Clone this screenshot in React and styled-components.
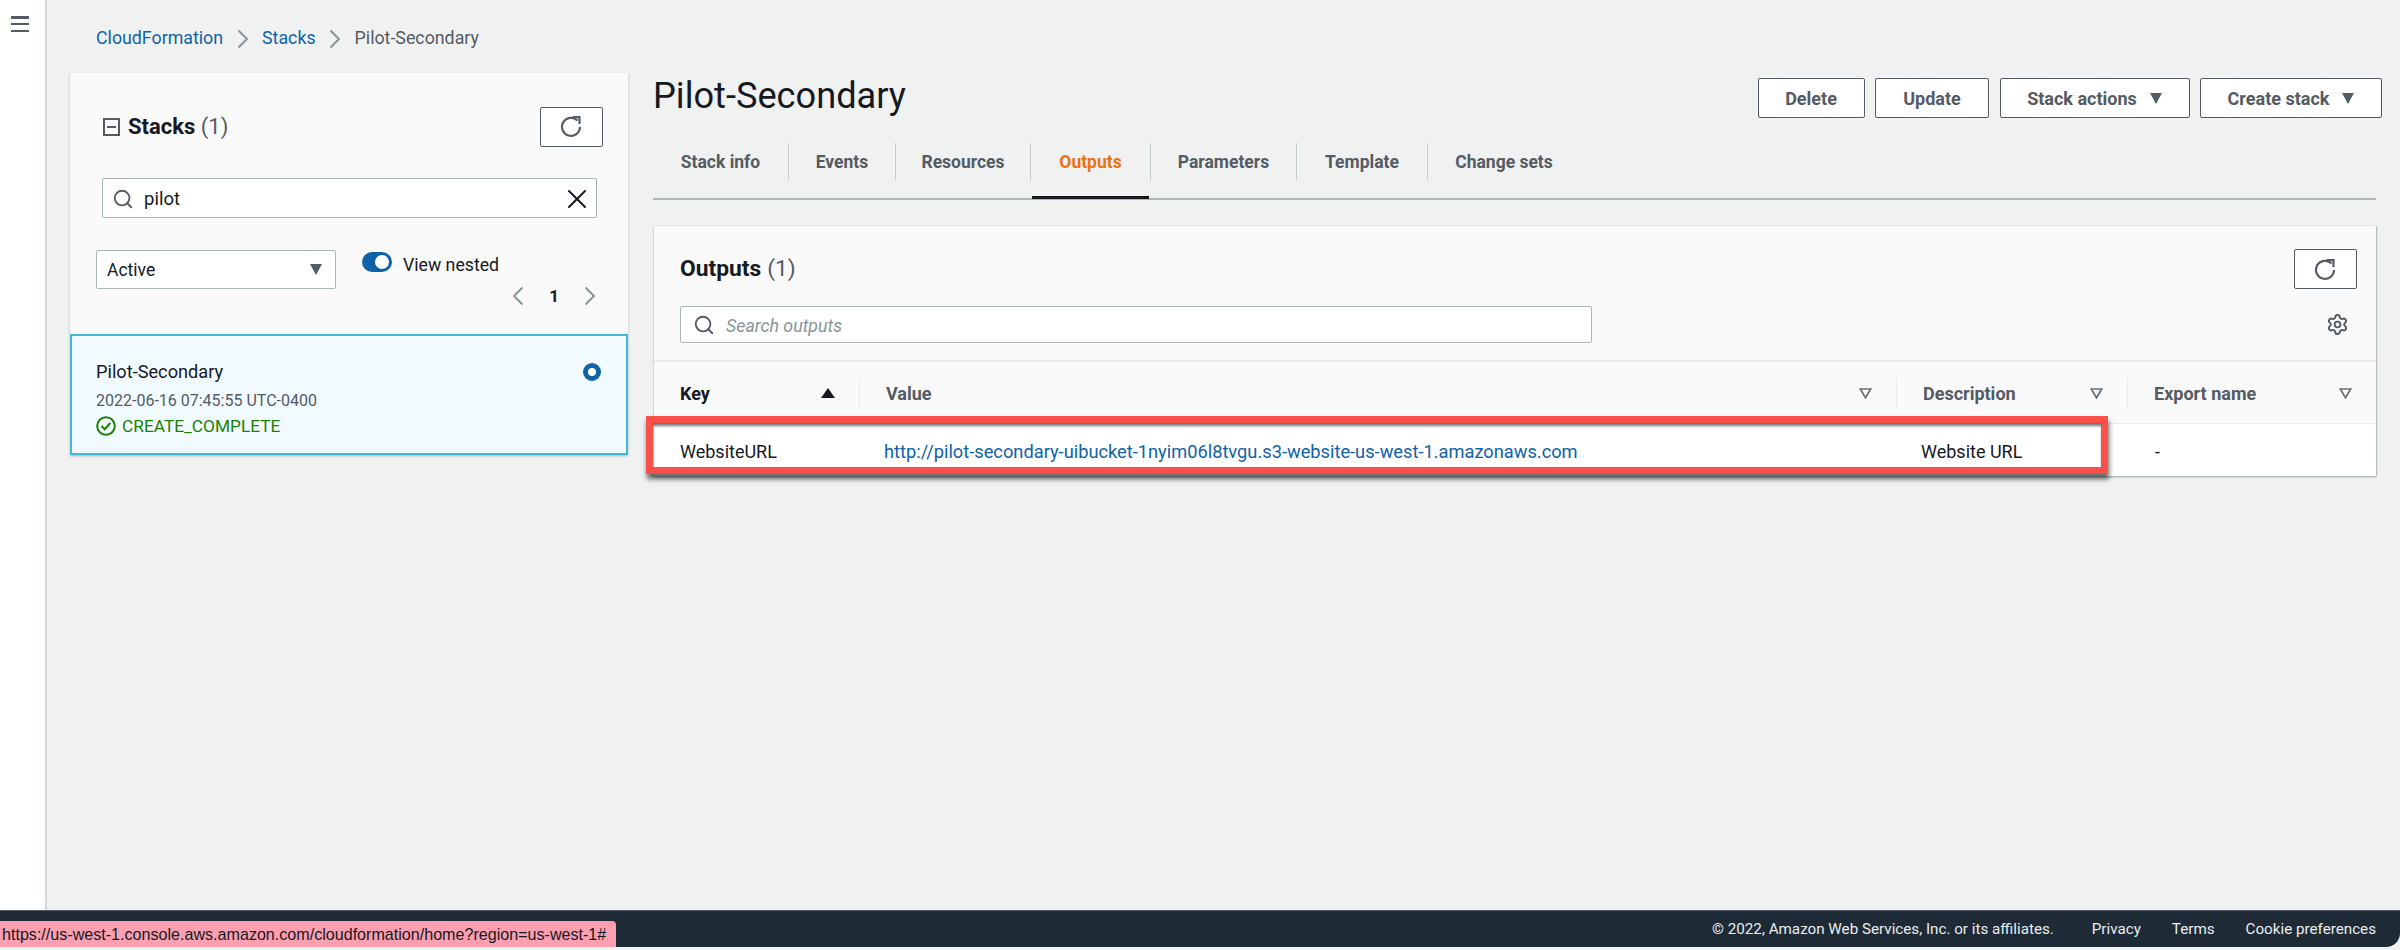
import styled, { createGlobalStyle } from "styled-components";
import { Search, X, Settings } from "lucide-react";

const GlobalStyle = createGlobalStyle`
    html, body {
        margin: 0;
        padding: 0;
        background: #f2f3f3;
    }
    * {
        box-sizing: border-box;
    }
    body {
        font-family: Roboto, "Liberation Sans", sans-serif;
        color: #16191f;
    }
`;

const Page = styled.div`
    width: 2400px;
    height: 950px;
    display: flex;
    flex-direction: column;
    overflow: hidden;
    background: #f0f2f2;
`;
const Shell = styled.div`
    flex: 0 0 910px;
    display: flex;
`;
const Rail = styled.div`
    flex: 0 0 47px;
    background: #fff;
    border-right: 2px solid #d5dbdb;
    padding: 16px 0 0 11px;
`;
const Hamburger = styled.div`
    width: 18px;
    height: 16px;
    display: flex;
    flex-direction: column;
    justify-content: space-between;
    span {
        display: block;
        height: 2.5px;
        background: #545b64;
    }
`;
const Content = styled.div`
    flex: 1;
    padding: 0 18px 0 23px;
`;
const Breadcrumbs = styled.nav`
    height: 73px;
    padding: 27px 0 0 26px;
    display: flex;
    align-items: flex-start;
    gap: 13.5px;
    font-size: 17.8px;
    line-height: 22px;
    color: #545b64;
    svg {
        margin-top: 2px;
    }
`;
const CrumbLink = styled.a`
    color: #0f62a8;
`;
const Columns = styled.div`
    display: flex;
    gap: 25px;
    align-items: flex-start;
`;

/* left stack list */
const StackPanel = styled.aside`
    flex: 0 0 558px;
    height: 382px;
    background: #fafafa;
    box-shadow: 0 1px 2px rgba(0, 28, 36, 0.3);
    display: flex;
    flex-direction: column;
`;
const PanelBody = styled.div`
    flex: 0 0 261px;
    padding: 34px 25px 0 26px;
`;
const StackHead = styled.div`
    display: flex;
    align-items: center;
    justify-content: space-between;
    padding-left: 7px;
    height: 39px;
`;
const PanelTitle = styled.h2`
    margin: 0;
    display: flex;
    align-items: center;
    gap: 8px;
    font-size: 22px;
    font-weight: 700;
    line-height: 36px;
    color: #16191f;
    span {
        color: #545b64;
        font-weight: 400;
    }
`;
const CollapseBox = styled.span`
    width: 17px;
    height: 18px;
    border: 2px solid #545b64;
    display: flex;
    align-items: center;
    justify-content: center;
    &::after {
        content: "";
        width: 9px;
        height: 2px;
        background: #545b64;
    }
`;
const IconButton = styled.button`
    width: 63px;
    height: 40px;
    padding: 0;
    border: 1.5px solid #545b64;
    border-radius: 2px;
    background: #fff;
    display: flex;
    align-items: center;
    justify-content: center;
    flex: none;
`;
const InputBox = styled.div`
    display: flex;
    align-items: center;
    background: #fff;
    border: 1.5px solid #aab7b8;
    border-radius: 2px;
    color: #545b64;
`;
const StackSearch = styled(InputBox)`
    width: 495px;
    height: 40px;
    margin: 32px 0 0 6px;
    padding: 1px 3px 0 9px;
    gap: 10px;
    font-size: 18.5px;
    color: #16191f;
    svg:first-child {
        color: #545b64;
    }
    svg:last-child {
        margin-left: auto;
        color: #16191f;
    }
`;
const FilterRow = styled.div`
    display: flex;
    margin-top: 32px;
    height: 59px;
`;
const Select = styled(InputBox)`
    flex: 0 0 240px;
    height: 39px;
    padding: 0 13px 0 10px;
    justify-content: space-between;
    font-size: 17.5px;
    color: #16191f;
`;
const Caret = styled.span`
    width: 0;
    height: 0;
    border-left: 6.5px solid transparent;
    border-right: 6.5px solid transparent;
    border-top: 11px solid #545b64;
    flex: none;
`;
const NestedCol = styled.div`
    flex: 1;
    padding-left: 26px;
`;
const ToggleLine = styled.div`
    display: flex;
    align-items: center;
    gap: 11px;
    height: 29px;
    font-size: 17.7px;
    color: #16191f;
`;
const Toggle = styled.span`
    width: 30px;
    height: 20px;
    border-radius: 10px;
    background: #0f62a8;
    position: relative;
    margin-top: -6px;
    &::after {
        content: "";
        position: absolute;
        right: 3px;
        top: 3px;
        width: 14px;
        height: 14px;
        border-radius: 50%;
        background: #fff;
    }
`;
const Pager = styled.div`
    display: flex;
    justify-content: flex-end;
    align-items: center;
    gap: 25px;
    margin: 6px 7px 0 0;
    height: 22px;
    font-size: 17px;
    font-weight: 700;
`;
const StackCard = styled.div`
    flex: 1;
    position: relative;
    padding: 24px 24px 0;
    background: #f1faff;
    border: 2px solid #44b9d6;
`;
const StackName = styled.div`
    font-size: 18.2px;
    line-height: 24px;
`;
const StackDate = styled.div`
    margin-top: 7px;
    font-size: 16px;
    line-height: 20px;
    color: #545b64;
`;
const StackStatus = styled.div`
    margin-top: 2px;
    display: flex;
    align-items: center;
    gap: 6px;
    font-size: 17.3px;
    line-height: 26px;
    color: #1d8102;
`;
const Radio = styled.span`
    position: absolute;
    top: 27px;
    right: 25px;
    width: 18px;
    height: 18px;
    border-radius: 50%;
    border: 5px solid #0f62a8;
    background: #fff;
`;

/* right detail area */
const Detail = styled.main`
    flex: 1;
    min-width: 0;
`;
const TitleRow = styled.div`
    display: flex;
    justify-content: space-between;
    align-items: flex-start;
    height: 70px;
`;
const PageTitle = styled.h1`
    margin: 1px 0 0;
    font-size: 36.2px;
    font-weight: 400;
    line-height: 44px;
    color: #16191f;
`;
const Actions = styled.div`
    display: flex;
    gap: 10.5px;
    padding-top: 5px;
`;
const ActionButton = styled.button`
    width: ${({ $w }) => $w}px;
    height: 40px;
    padding: 0;
    border: 1.5px solid #545b64;
    border-radius: 2px;
    background: #fff;
    color: #545b64;
    font-family: inherit;
    font-size: 18px;
    font-weight: 700;
    display: flex;
    align-items: center;
    justify-content: center;
    gap: 13px;
`;
const Tabs = styled.div`
    display: flex;
    margin-right: 6px;
    height: 57px;
    border-bottom: 2px solid #aab7b8;
`;
const Tab = styled.div`
    position: relative;
    width: ${({ $w }) => $w}px;
    height: 37px;
    display: flex;
    align-items: center;
    justify-content: center;
    font-size: 17.5px;
    font-weight: 700;
    color: ${({ $active }) => ($active ? "#ec7211" : "#545b64")};
    border-right: ${({ $last }) => ($last ? "none" : "1.5px solid #c4cccc")};
    &::after {
        content: "";
        display: ${({ $active }) => ($active ? "block" : "none")};
        position: absolute;
        left: 1px;
        right: 1px;
        top: 53px;
        height: 3px;
        background: #16191f;
    }
`;
const OutputCard = styled.section`
    position: relative;
    margin: 26px 6px 0 1px;
    background: #fff;
    box-shadow: 0 1px 2px rgba(0, 28, 36, 0.35), 1px 0 1px rgba(0, 28, 36, 0.15);
`;
const CardHead = styled.div`
    height: 136px;
    padding: 23px 19px 0 26px;
    background: #fafafa;
    border-bottom: 2px solid #eaeded;
`;
const CardTop = styled.div`
    display: flex;
    justify-content: space-between;
    align-items: center;
`;
const CardTitle = styled(PanelTitle)`
    font-size: 22.8px;
    gap: 6px;
`;
const CardTools = styled.div`
    display: flex;
    justify-content: space-between;
    align-items: center;
    margin-top: 17px;
    padding-right: 8px;
    svg {
        color: #545b64;
    }
`;
const OutputSearch = styled(InputBox)`
    width: 912px;
    height: 37px;
    padding: 0 12px;
    gap: 11px;
`;
const Placeholder = styled.span`
    padding-top: 1px;
    font-size: 17.8px;
    font-style: italic;
    color: #879596;
`;
const TableHead = styled.div`
    display: grid;
    grid-template-columns: 206px 1037px 231px 1fr;
    height: 62px;
    align-items: center;
    background: #fafafa;
    border-bottom: 1.5px solid #eaeded;
`;
const HeadCell = styled.div`
    height: 30px;
    padding: 1px 24px 0 26px;
    display: flex;
    align-items: center;
    justify-content: space-between;
    font-size: 18px;
    font-weight: 700;
    color: ${({ $sorted }) => ($sorted ? "#16191f" : "#545b64")};
    border-right: ${({ $last }) => ($last ? "none" : "1.5px solid #eaeded")};
`;
const SortUp = styled.span`
    width: 0;
    height: 0;
    border-left: 7px solid transparent;
    border-right: 7px solid transparent;
    border-bottom: 10px solid #16191f;
`;
const TableRow = styled.div`
    display: grid;
    grid-template-columns: 206px 1037px 231px 1fr;
    height: 52px;
    padding-top: 2px;
    align-items: center;
    font-size: 18px;
`;
const Cell = styled.div`
    padding-left: ${({ $pad }) => $pad || 26}px;
    white-space: nowrap;
`;
const ValueLink = styled.a`
    font-size: 18.25px;
    color: #0f62a8;
`;
const Highlight = styled.div`
    position: absolute;
    left: -8px;
    top: 190px;
    width: 1462px;
    height: 58px;
    border: 7px solid #f9504a;
    box-shadow: 1px 5px 5px rgba(0, 0, 0, 0.6), inset 0 4px 3px -1px rgba(0, 0, 0, 0.55);
    pointer-events: none;
`;

/* footer */
const Footer = styled.footer`
    position: relative;
    flex: 0 0 37px;
    background: #1f2a37;
    border-top: 1px solid #545b64;
    border-radius: 0 0 14px 0;
    display: flex;
    justify-content: flex-end;
    align-items: center;
    padding: 0 24px 0 0;
    gap: 31px;
    font-size: 15.2px;
    color: #eaeded;
`;
const Copyright = styled.span`
    margin-right: 7px;
`;
const StatusTip = styled.div`
    position: absolute;
    left: 0;
    bottom: 0;
    width: 616px;
    height: 26px;
    padding-left: 2px;
    background: #fb9fb1;
    border-radius: 0 4px 0 0;
    font-family: "Liberation Sans", Arial, sans-serif;
    font-size: 16.1px;
    line-height: 26px;
    color: #16191f;
    white-space: nowrap;
`;

function RefreshIcon() {
    return (
        <svg width="23" height="23" viewBox="0 0 23 23" fill="none" stroke="#545b64" strokeWidth="2.2">
            <path d="M20 12 A9 9 0 1 1 17.5 5.6" />
            <path d="M12.5 2.2 H19.5 V9" />
        </svg>
    );
}

function FilterIcon() {
    return (
        <svg width="13" height="11" viewBox="0 0 13 11" fill="none" stroke="#687078" strokeWidth="1.7">
            <path d="M1.3 1h10.4L6.5 9.8z" />
        </svg>
    );
}

function CheckIcon() {
    return (
        <svg width="20" height="20" viewBox="0 0 20 20" fill="none" stroke="#1d8102" strokeWidth="2">
            <circle cx="10" cy="10" r="8.8" />
            <path d="M5.5 10l3.2 3.2 5.6-6.2" />
        </svg>
    );
}

function Chevron({ left }) {
    return (
        <svg width="12" height="20" viewBox="0 0 12 20" fill="none" stroke="#879596" strokeWidth="2">
            <path d={left ? "M10.5 1.5 L2 10 L10.5 18.5" : "M1.5 1.5 L10 10 L1.5 18.5"} />
        </svg>
    );
}

const headers = [
    { label: "Key", sorted: true },
    { label: "Value" },
    { label: "Description" },
    { label: "Export name", last: true },
];

const tabs = [
    { label: "Stack info", width: 136 },
    { label: "Events", width: 107 },
    { label: "Resources", width: 135 },
    { label: "Outputs", width: 120 },
    { label: "Parameters", width: 146 },
    { label: "Template", width: 131 },
    { label: "Change sets", width: 152 },
];

export default function App() {
    return (
        <>
            <GlobalStyle />
            <Page>
                <Shell>
                    <Rail>
                        <Hamburger>
                            <span />
                            <span />
                            <span />
                        </Hamburger>
                    </Rail>
                    <Content>
                        <Breadcrumbs>
                            <CrumbLink>CloudFormation</CrumbLink>
                            <Chevron />
                            <CrumbLink>Stacks</CrumbLink>
                            <Chevron />
                            <span>Pilot-Secondary</span>
                        </Breadcrumbs>
                        <Columns>
                            <StackPanel>
                                <PanelBody>
                                    <StackHead>
                                        <PanelTitle>
                                            <CollapseBox />
                                            <div>
                                                Stacks <span>(1)</span>
                                            </div>
                                        </PanelTitle>
                                        <IconButton>
                                            <RefreshIcon />
                                        </IconButton>
                                    </StackHead>
                                    <StackSearch>
                                        <Search size={22} />
                                        pilot
                                        <X size={32} strokeWidth={1.5} />
                                    </StackSearch>
                                    <FilterRow>
                                        <Select>
                                            Active
                                            <Caret />
                                        </Select>
                                        <NestedCol>
                                            <ToggleLine>
                                                <Toggle />
                                                View nested
                                            </ToggleLine>
                                            <Pager>
                                                <Chevron left />
                                                1
                                                <Chevron />
                                            </Pager>
                                        </NestedCol>
                                    </FilterRow>
                                </PanelBody>
                                <StackCard>
                                    <StackName>Pilot-Secondary</StackName>
                                    <StackDate>2022-06-16 07:45:55 UTC-0400</StackDate>
                                    <StackStatus>
                                        <CheckIcon />
                                        CREATE_COMPLETE
                                    </StackStatus>
                                    <Radio />
                                </StackCard>
                            </StackPanel>
                            <Detail>
                                <TitleRow>
                                    <PageTitle>Pilot-Secondary</PageTitle>
                                    <Actions>
                                        <ActionButton $w={107}>Delete</ActionButton>
                                        <ActionButton $w={114}>Update</ActionButton>
                                        <ActionButton $w={190}>
                                            Stack actions
                                            <Caret />
                                        </ActionButton>
                                        <ActionButton $w={182}>
                                            Create stack
                                            <Caret />
                                        </ActionButton>
                                    </Actions>
                                </TitleRow>
                                <Tabs>
                                    {tabs.map((tab, i) => (
                                        <Tab
                                            key={tab.label}
                                            $w={tab.width}
                                            $last={i === tabs.length - 1}
                                            $active={tab.label === "Outputs"}
                                        >
                                            {tab.label}
                                        </Tab>
                                    ))}
                                </Tabs>
                                <OutputCard>
                                    <CardHead>
                                        <CardTop>
                                            <CardTitle>
                                                Outputs <span>(1)</span>
                                            </CardTitle>
                                            <IconButton>
                                                <RefreshIcon />
                                            </IconButton>
                                        </CardTop>
                                        <CardTools>
                                            <OutputSearch>
                                                <Search size={22} />
                                                <Placeholder>Search outputs</Placeholder>
                                            </OutputSearch>
                                            <Settings size={23} strokeWidth={2} />
                                        </CardTools>
                                    </CardHead>
                                    <TableHead>
                                        {headers.map((h) => (
                                            <HeadCell key={h.label} $sorted={h.sorted} $last={h.last}>
                                                {h.label}
                                                {h.sorted ? <SortUp /> : <FilterIcon />}
                                            </HeadCell>
                                        ))}
                                    </TableHead>
                                    <TableRow>
                                        <Cell>WebsiteURL</Cell>
                                        <Cell $pad={24}>
                                            <ValueLink>
                                                http://pilot-secondary-uibucket-1nyim06l8tvgu.s3-website-us-west-1.amazonaws.com
                                            </ValueLink>
                                        </Cell>
                                        <Cell $pad={24}>Website URL</Cell>
                                        <Cell $pad={27}>-</Cell>
                                    </TableRow>
                                    <Highlight />
                                </OutputCard>
                            </Detail>
                        </Columns>
                    </Content>
                </Shell>
                <Footer>
                    <Copyright>© 2022, Amazon Web Services, Inc. or its affiliates.</Copyright>
                    <span>Privacy</span>
                    <span>Terms</span>
                    <span>Cookie preferences</span>
                    <StatusTip>https://us-west-1.console.aws.amazon.com/cloudformation/home?region=us-west-1#</StatusTip>
                </Footer>
            </Page>
        </>
    );
}
